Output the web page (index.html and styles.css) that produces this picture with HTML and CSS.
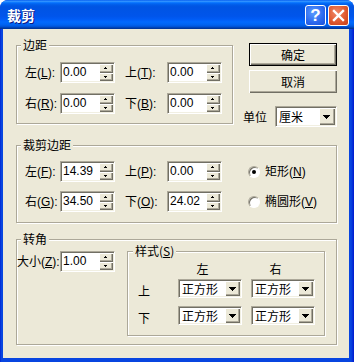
FILE: index.html
```html
<!DOCTYPE html>
<html lang="zh-CN">
<head>
<meta charset="utf-8">
<title>裁剪</title>
<link rel="stylesheet" href="styles.css">
</head>
<body>
<div class="window">
  <div class="titlebar">
    <span class="title">裁剪</span>
    <div class="caption-btns">
      <span class="cbtn help">?</span>
      <span class="cbtn close"><svg width="13" height="13" viewBox="0 0 13 13"><path d="M2 2L11 11M11 2L2 11" stroke="#fff" stroke-width="2.4" stroke-linecap="square"/></svg></span>
    </div>
  </div>
  <div class="client">
    <div class="top-row">
      <fieldset class="group g-margin">
        <legend>边距</legend>
        <div class="fields">
          <label class="lbl">左(<u>L</u>):</label>
          <div class="spin"><span class="val">0.00</span><span class="arrows"><span class="sb"><svg width="3" height="2"><path d="M1 0h1v1h1v1h-3v-1h1z"/></svg></span><span class="sb"><svg width="3" height="2"><path d="M0 0h3v1h-1v1h-1v-1h-1z"/></svg></span></span></div>
          <label class="lbl lbl2">上(<u>T</u>):</label>
          <div class="spin"><span class="val">0.00</span><span class="arrows"><span class="sb"><svg width="3" height="2"><path d="M1 0h1v1h1v1h-3v-1h1z"/></svg></span><span class="sb"><svg width="3" height="2"><path d="M0 0h3v1h-1v1h-1v-1h-1z"/></svg></span></span></div>
          <label class="lbl">右(<u>R</u>):</label>
          <div class="spin"><span class="val">0.00</span><span class="arrows"><span class="sb"><svg width="3" height="2"><path d="M1 0h1v1h1v1h-3v-1h1z"/></svg></span><span class="sb"><svg width="3" height="2"><path d="M0 0h3v1h-1v1h-1v-1h-1z"/></svg></span></span></div>
          <label class="lbl lbl2">下(<u>B</u>):</label>
          <div class="spin"><span class="val">0.00</span><span class="arrows"><span class="sb"><svg width="3" height="2"><path d="M1 0h1v1h1v1h-3v-1h1z"/></svg></span><span class="sb"><svg width="3" height="2"><path d="M0 0h3v1h-1v1h-1v-1h-1z"/></svg></span></span></div>
        </div>
      </fieldset>
      <div class="side">
        <div class="btn default">确定</div>
        <div class="btn">取消</div>
        <div class="unit-row">
          <span class="unit-lbl">单位</span>
          <div class="combo unit"><span class="ctext">厘米</span><span class="dd"><svg width="7" height="4"><path d="M0 0H7V1H6V2H5V3H4V4H3V3H2V2H1V1H0Z"/></svg></span></div>
        </div>
      </div>
    </div>

    <fieldset class="group g-crop">
      <legend>裁剪边距</legend>
      <div class="fields crop-fields">
        <label class="lbl">左(<u>F</u>):</label>
        <div class="spin"><span class="val">14.39</span><span class="arrows"><span class="sb"><svg width="3" height="2"><path d="M1 0h1v1h1v1h-3v-1h1z"/></svg></span><span class="sb"><svg width="3" height="2"><path d="M0 0h3v1h-1v1h-1v-1h-1z"/></svg></span></span></div>
        <label class="lbl lbl2">上(<u>P</u>):</label>
        <div class="spin"><span class="val">0.00</span><span class="arrows"><span class="sb"><svg width="3" height="2"><path d="M1 0h1v1h1v1h-3v-1h1z"/></svg></span><span class="sb"><svg width="3" height="2"><path d="M0 0h3v1h-1v1h-1v-1h-1z"/></svg></span></span></div>
        <div class="radio-row"><span class="radio checked"></span><span>矩形(<u>N</u>)</span></div>
        <label class="lbl">右(<u>G</u>):</label>
        <div class="spin"><span class="val">34.50</span><span class="arrows"><span class="sb"><svg width="3" height="2"><path d="M1 0h1v1h1v1h-3v-1h1z"/></svg></span><span class="sb"><svg width="3" height="2"><path d="M0 0h3v1h-1v1h-1v-1h-1z"/></svg></span></span></div>
        <label class="lbl lbl2">下(<u>O</u>):</label>
        <div class="spin"><span class="val">24.02</span><span class="arrows"><span class="sb"><svg width="3" height="2"><path d="M1 0h1v1h1v1h-3v-1h1z"/></svg></span><span class="sb"><svg width="3" height="2"><path d="M0 0h3v1h-1v1h-1v-1h-1z"/></svg></span></span></div>
        <div class="radio-row"><span class="radio"></span><span>椭圆形(<u>V</u>)</span></div>
      </div>
    </fieldset>

    <fieldset class="group g-corner">
      <legend>转角</legend>
      <div class="corner-body">
        <div class="size-row">
          <label class="lbl size-lbl">大小(<u>Z</u>):</label>
          <div class="spin"><span class="val">1.00</span><span class="arrows"><span class="sb"><svg width="3" height="2"><path d="M1 0h1v1h1v1h-3v-1h1z"/></svg></span><span class="sb"><svg width="3" height="2"><path d="M0 0h3v1h-1v1h-1v-1h-1z"/></svg></span></span></div>
        </div>
        <fieldset class="group g-style">
          <legend>样式(<u>S</u>)</legend>
          <div class="style-grid">
            <span></span><span class="hdr">左</span><span class="hdr">右</span>
            <span class="rlbl">上</span>
            <div class="combo sm"><span class="ctext">正方形</span><span class="dd"><svg width="7" height="4"><path d="M0 0H7V1H6V2H5V3H4V4H3V3H2V2H1V1H0Z"/></svg></span></div>
            <div class="combo sm"><span class="ctext">正方形</span><span class="dd"><svg width="7" height="4"><path d="M0 0H7V1H6V2H5V3H4V4H3V3H2V2H1V1H0Z"/></svg></span></div>
            <span class="rlbl">下</span>
            <div class="combo sm"><span class="ctext">正方形</span><span class="dd"><svg width="7" height="4"><path d="M0 0H7V1H6V2H5V3H4V4H3V3H2V2H1V1H0Z"/></svg></span></div>
            <div class="combo sm"><span class="ctext">正方形</span><span class="dd"><svg width="7" height="4"><path d="M0 0H7V1H6V2H5V3H4V4H3V3H2V2H1V1H0Z"/></svg></span></div>
          </div>
        </fieldset>
      </div>
    </fieldset>
  </div>
</div>
</body>
</html>
```

FILE: styles.css
```css
* { box-sizing: border-box; margin: 0; padding: 0; }
html, body { width: 354px; height: 362px; overflow: hidden; background: #fff; }
body {
  font-family: "Liberation Sans", "Noto Sans CJK SC", sans-serif;
  font-size: 12px;
  line-height: 14px;
  color: #000;
}
u { text-decoration: underline; text-underline-offset: 1px; }

.window {
  width: 354px;
  height: 362px;
  display: flex;
  flex-direction: column;
  background: linear-gradient(to right, #0019cf 0, #0845e0 1px, #0845e0 351px, #0019cf 354px);
  border-radius: 8px 8px 0 0;
  overflow: hidden;
}

.titlebar {
  height: 29px;
  flex: none;
  display: flex;
  align-items: center;
  justify-content: space-between;
  padding: 0 5px 0 7px;
  background: linear-gradient(to bottom, #0058ee 0%, #3593ff 4%, #288eff 6%, #127dff 8%, #036ffc 10%, #0262ee 14%, #0057e5 20%, #0054e3 24%, #0055eb 56%, #005bf5 66%, #026afe 76%, #0062ef 86%, #0052d6 92%, #0040ab 96%, #003092 100%);
}
.title {
  font-family: "Noto Sans CJK SC", sans-serif;
  font-weight: bold;
  font-size: 14px;
  line-height: 16px;
  color: #fff;
  text-shadow: 1px 1px 0 #0a1883;
}
.caption-btns { display: flex; gap: 2px; margin-top: 1px; }
.cbtn {
  width: 21px;
  height: 21px;
  border: 1px solid #fff;
  border-radius: 3px;
  display: flex;
  align-items: center;
  justify-content: center;
  color: #fff;
}
.help {
  background: radial-gradient(circle at 40% 35%, #5b9cff 0%, #2b68ee 60%, #1a50d8 100%);
  font-family: "Liberation Sans", sans-serif;
  font-weight: bold;
  font-size: 17px;
  line-height: 1;
}
.close {
  background: radial-gradient(circle at 40% 35%, #f08a6a 0%, #e05a30 55%, #c53e18 100%);
}

.client {
  flex: 1;
  margin: 0 5px 4px 3px;
  background: #ece9d8;
  padding: 9px 12px 0 13px;
  display: flex;
  flex-direction: column;
}

.group {
  border: 1px solid #aca899;
  box-shadow: 1px 1px 0 #fff, inset 1px 1px 0 #fff;
  min-width: 0;
}
.group > legend {
  margin-left: 4px;
  padding: 0 2px;
  font-family: "Noto Sans CJK SC", sans-serif;
  line-height: 14px;
  background: #ece9d8;
}

.top-row { display: flex; align-items: flex-start; }
.g-margin { width: 217px; flex: none; }

.fields {
  display: grid;
  grid-template-columns: 35px 55px 52px 55px;
  grid-auto-rows: 21px;
  row-gap: 10px;
  align-items: center;
  padding: 10px 0 9px 8px;
}
.lbl { white-space: nowrap; }
.lbl2 { padding-left: 10px; }

.spin {
  width: 55px;
  height: 21px;
  background: #fff;
  border-top: 1px solid #aca899;
  border-left: 1px solid #aca899;
  border-right: 1px solid #fff;
  border-bottom: 1px solid #fff;
  box-shadow: inset 1px 1px 0 #716f64, inset -1px -1px 0 #f1efe2;
  display: flex;
  align-items: center;
  justify-content: space-between;
  padding: 1px 1px 1px 2px;
}
.val { line-height: 14px; margin-top: -1px; }
.arrows {
  width: 14px;
  height: 17px;
  display: flex;
  flex-direction: column;
}
.sb {
  flex: 1;
  background: #ece9d8;
  box-shadow: inset 1px 1px 0 #fff, inset -1px -1px 0 #716f64, inset -2px -2px 0 #aca899;
  display: flex;
  align-items: center;
  justify-content: center;
  padding-right: 1px;
}
.sb svg { display: block; }

.side {
  margin-left: 10px;
  width: 94px;
  display: flex;
  flex-direction: column;
  align-items: flex-end;
  padding-top: 5px;
}
.btn {
  width: 88px;
  height: 23px;
  display: flex;
  align-items: center;
  justify-content: center;
  font-family: "Noto Sans CJK SC", sans-serif;
  background: #ece9d8;
  box-shadow: inset 1px 1px 0 #fff, inset -1px -1px 0 #716f64, inset -2px -2px 0 #aca899;
}
.btn.default { border: 1px solid #000; }
.btn + .btn { margin-top: 4px; }
.unit-row {
  margin-top: 13px;
  width: 94px;
  display: flex;
  align-items: center;
  justify-content: space-between;
}
.unit-lbl { font-family: "Noto Sans CJK SC", sans-serif; }

.combo {
  width: 62px;
  height: 21px;
  background: #fff;
  border-top: 1px solid #aca899;
  border-left: 1px solid #aca899;
  border-right: 1px solid #fff;
  border-bottom: 1px solid #fff;
  box-shadow: inset 1px 1px 0 #716f64, inset -1px -1px 0 #f1efe2;
  display: flex;
  align-items: center;
  justify-content: space-between;
  padding: 1px 1px 1px 2px;
  font-family: "Noto Sans CJK SC", sans-serif;
}
.combo.sm { width: 64px; height: 19px; }
.ctext { padding-left: 1px; line-height: 14px; }
.dd {
  width: 16px;
  height: 17px;
  background: #ece9d8;
  box-shadow: inset 1px 1px 0 #fff, inset -1px -1px 0 #716f64, inset -2px -2px 0 #aca899;
  display: flex;
  align-items: center;
  justify-content: center;
  padding-right: 1px;
}
.combo.sm .dd { width: 15px; height: 15px; }
.dd svg { display: block; }

.g-crop { margin-top: 11px; }
.crop-fields {
  grid-template-columns: 35px 55px 52px 55px 1fr;
  row-gap: 9px;
  padding: 9px 0 10px 8px;
}
.radio-row {
  display: flex;
  align-items: center;
  gap: 5px;
  padding-left: 26px;
  white-space: nowrap;
}
.radio {
  width: 12px;
  height: 12px;
  border-radius: 50%;
  background: #fff;
  border: 1px solid;
  border-color: #aca899 #fff #fff #aca899;
  box-shadow: inset 1px 1px 0 #716f64;
  display: flex;
  align-items: center;
  justify-content: center;
}
.radio.checked::after {
  content: "";
  width: 4px;
  height: 4px;
  border-radius: 50%;
  background: #000;
}

.g-corner { margin-top: 9px; }
.corner-body {
  display: flex;
  align-items: flex-start;
  margin-top: -2px;
  padding-bottom: 8px;
}
.size-row {
  display: flex;
  align-items: center;
  margin-top: 7px;
  width: 110px;
}
.size-lbl { width: 43px; }
.g-style { width: 198px; }
.g-style > legend { margin-left: 5px; }

.style-grid {
  display: grid;
  grid-template-columns: 31px 64px 64px;
  grid-template-rows: 17px 27px 19px;
  column-gap: 9px;
  align-items: start;
  padding: 4px 0 10px 10px;
  font-family: "Noto Sans CJK SC", sans-serif;
}
.hdr { text-align: center; padding-right: 15px; }
.rlbl { margin-top: 5px; }
```
